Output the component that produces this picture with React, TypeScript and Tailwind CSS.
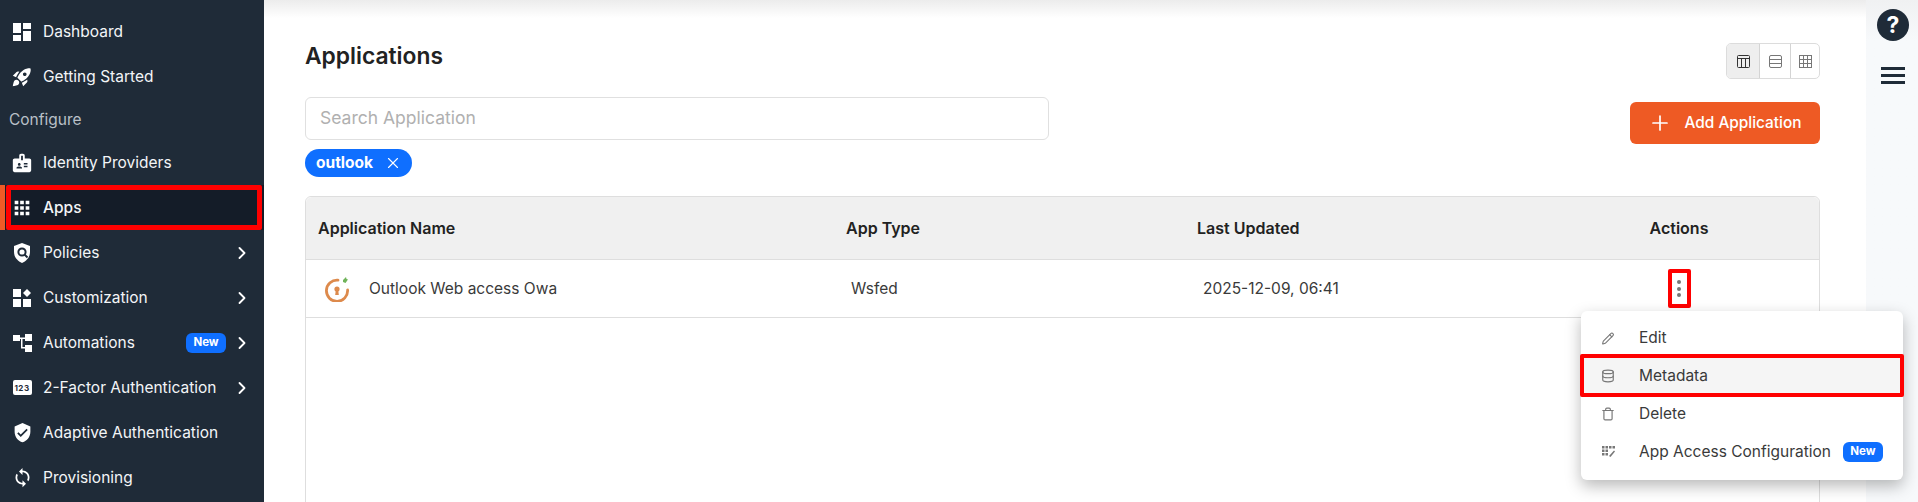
import { ChevronRight, Database, Pencil, Plus, Trash, X } from "lucide-react";
import React from "react";
import {
  MdApps,
  MdBadge,
  MdOutlineSync,
  MdRocketLaunch,
  MdVerifiedUser,
} from "react-icons/md";

const NewBadge = () => (
  <span className="flex h-[20px] w-[40px] items-center justify-center rounded-[6px] bg-[#0f6fff] text-[11.5px] font-bold text-white">
    New
  </span>
);

const DashboardIcon = () => (
  <svg width="18" height="18" viewBox="0 0 18 18" fill="currentColor">
    <rect x="0" y="0" width="8" height="10" />
    <rect x="10" y="0" width="8" height="6" />
    <rect x="0" y="12" width="8" height="6" />
    <rect x="10" y="8" width="8" height="10" />
  </svg>
);

const PolicyIcon = () => (
  <svg width="18" height="20" viewBox="0 0 18 20">
    <path d="M9 0l8 3v6c0 5-3.4 9-8 11-4.600-2-8-6-8-11V3z" fill="currentColor" />
    <circle cx="9" cy="9" r="3.600" fill="none" stroke="#1f2b38" strokeWidth="2" />
    <path d="M11.500 11.500l3 3" stroke="#1f2b38" strokeWidth="2" />
  </svg>
);

const CustomizeIcon = () => (
  <svg width="18" height="18" viewBox="0 0 18 18" fill="currentColor">
    <rect x="0" y="0" width="8" height="8" />
    <path d="M14 0l4 4-4 4-4-4z" />
    <rect x="0" y="10" width="8" height="8" />
    <rect x="10" y="10" width="8" height="8" />
  </svg>
);

const AutomationIcon = () => (
  <svg width="19" height="18" viewBox="0 0 19 18" fill="currentColor">
    <rect x="0" y="1" width="7" height="6" />
    <rect x="12" y="0" width="7" height="7" />
    <rect x="12" y="11" width="7" height="7" />
    <path d="M7 3.500h5v1.500H9.500v8H12v1.500H8V5H7z" />
  </svg>
);

const CodeIcon = () => (
  <span className="flex h-[15px] w-[19px] items-center justify-center rounded-[2px] bg-white text-[8px] font-bold tracking-[0.5px] text-[#1f2b38]">
    123
  </span>
);

const navItems = [
  { label: "Dashboard", icon: <DashboardIcon /> },
  { label: "Getting Started", icon: <MdRocketLaunch size={22} /> },
  { label: "Configure", section: true },
  { label: "Identity Providers", icon: <MdBadge size={22} /> },
  { label: "Apps", icon: <MdApps size={22} />, active: true },
  { label: "Policies", icon: <PolicyIcon />, arrow: true },
  { label: "Customization", icon: <CustomizeIcon />, arrow: true },
  { label: "Automations", icon: <AutomationIcon />, arrow: true, badge: true },
  { label: "2-Factor Authentication", icon: <CodeIcon />, arrow: true },
  { label: "Adaptive Authentication", icon: <MdVerifiedUser size={21} /> },
  { label: "Provisioning", icon: <MdOutlineSync size={21} /> },
];

const Sidebar = () => (
  <aside className="flex h-[502px] w-[264px] shrink-0 flex-col overflow-hidden bg-[#1f2b38] pt-[9px] text-[15.5px] text-[#f3f5f7]">
    {navItems.map((item) =>
      item.section ? (
        <div key={item.label} className="flex h-[41px] items-center pl-[9px] text-[#b9c0c7]">
          {item.label}
        </div>
      ) : (
        <div
          key={item.label}
          className={`relative flex h-[45px] shrink-0 items-center ${
            item.active ? "border-l-[5px] border-[#ef5a26] bg-[#141c28] font-medium" : ""
          }`}
        >
          {item.active && (
            <div className="absolute top-0 right-[2px] bottom-0 left-[1px] rounded-[2px] border-[5px] border-[#ff0000]" />
          )}
          <span
            className={`flex w-[43px] shrink-0 items-center justify-center pl-[1px] text-white ${
              item.active ? "-ml-[5px]" : ""
            }`}
          >
            {item.icon}
          </span>
          <span className="whitespace-nowrap">{item.label}</span>
          {item.badge && (
            <span className="absolute left-[186px]">
              <NewBadge />
            </span>
          )}
          {item.arrow && (
            <ChevronRight size={20} strokeWidth={2.2} className="absolute left-[232px] text-white" />
          )}
        </div>
      ),
    )}
  </aside>
);

const ViewToggle = () => (
  <div className="flex h-[36px] w-[94px] overflow-hidden rounded-[5px] border border-[#dcdcdc] text-[#777]">
    <div className="flex w-[33px] items-center justify-center border-r border-[#d4d4d4] bg-[#eeeeee] text-[#333]">
      <svg width="13" height="13" viewBox="0 0 13 13" fill="none" stroke="currentColor">
        <rect x="0.500" y="0.500" width="12" height="12" rx="1" />
        <path d="M0.500 3.500h12M4.500 3.500v9M8.500 3.500v9" />
      </svg>
    </div>
    <div className="flex w-[31px] items-center justify-center border-r border-[#d4d4d4]">
      <svg width="13" height="13" viewBox="0 0 13 13" fill="none" stroke="currentColor">
        <rect x="0.500" y="0.500" width="12" height="12" rx="1.500" />
        <path d="M0.500 4.500h12M0.500 8.500h12" />
      </svg>
    </div>
    <div className="flex flex-1 items-center justify-center">
      <svg width="13" height="13" viewBox="0 0 13 13" fill="none" stroke="currentColor">
        <rect x="0.500" y="0.500" width="12" height="12" />
        <path d="M0.500 4.500h12M0.500 8.500h12M4.500 0.500v12M8.500 0.500v12" />
      </svg>
    </div>
  </div>
);

const AppLogo = () => (
  <svg width="28" height="26" viewBox="0 0 28 26" fill="none">
    <path
      d="M15 4.200A10.600 10.600 0 1 0 24.600 14"
      stroke="#dd8a4c"
      strokeWidth="2.800"
      strokeLinecap="round"
    />
    <circle cx="14" cy="13" r="2.600" fill="#dd8a4c" />
    <path d="M12.800 14h2.400l.6 5h-3.600z" fill="#dd8a4c" />
    <path d="M20 4l3-3 .5 2 1.500.5-2.500 3.500-2.500-1z" fill="#6fb35a" />
  </svg>
);

const AccessIcon = () => (
  <svg width="13" height="12" viewBox="0 0 13 12" fill="#777">
    <rect x="0" y="0" width="2.500" height="2.500" />
    <rect x="3.500" y="0" width="2.500" height="2.500" />
    <rect x="7" y="0" width="2.500" height="2.500" />
    <rect x="10.500" y="0" width="2.500" height="2.500" />
    <rect x="0" y="3.500" width="2.500" height="2.500" />
    <rect x="3.500" y="3.500" width="2.500" height="2.500" />
    <rect x="0" y="7" width="2.500" height="2.500" />
    <rect x="3.500" y="7" width="2.500" height="2.500" />
    <path d="M7 10l5-5.500 1 1L8.500 11z" />
  </svg>
);

const ActionMenu = () => (
  <div className="absolute top-[311px] left-[1581px] flex h-[169px] w-[322px] flex-col rounded-[6px] bg-white pt-[8px] text-[15.5px] text-[#3a3a3a] shadow-[0_6px_16px_rgba(0,0,0,0.28)]">
    <div className="flex h-[38px] items-center">
      <Pencil size={13} className="ml-[20px] w-[14px] text-[#777]" />
      <span className="ml-[24px]">Edit</span>
    </div>
    <div className="relative flex h-[38px] items-center bg-[#f5f5f5]">
      <div className="absolute -top-[3px] -right-[1px] -bottom-[2px] -left-[1px] rounded-[2px] border-[4px] border-[#ff0000]" />
      <Database size={14} className="ml-[20px] text-[#777]" />
      <span className="ml-[24px]">Metadata</span>
    </div>
    <div className="flex h-[38px] items-center">
      <Trash size={14} className="ml-[20px] text-[#777]" />
      <span className="ml-[24px]">Delete</span>
    </div>
    <div className="flex h-[38px] items-center">
      <span className="ml-[20px] flex w-[14px] justify-center">
        <AccessIcon />
      </span>
      <span className="ml-[24px]">App Access Configuration</span>
      <span className="ml-[12px]">
        <NewBadge />
      </span>
    </div>
  </div>
);

const AppTable = () => (
  <div className="h-[400px] rounded-t-[6px] border border-[#dedede]">
    <div className="grid h-[63px] grid-cols-[527px_364px_1fr_232px] items-center rounded-t-[6px] border-b border-[#dedede] bg-[#f0f0f0] pb-[1px] text-[16px] font-semibold text-[#222]">
      <div className="pl-[12px]">Application Name</div>
      <div className="pl-[13px]">App Type</div>
      <div>Last Updated</div>
      <div className="pr-[48px] text-center">Actions</div>
    </div>
    <div className="grid h-[58px] grid-cols-[527px_364px_1fr_232px] items-center border-b border-[#dedede] text-[15.5px] text-[#3a3a3a]">
      <div className="flex items-center pl-[17px]">
        <AppLogo />
        <span className="ml-[18px]">Outlook Web access Owa</span>
      </div>
      <div className="pl-[18px]">Wsfed</div>
      <div className="pl-[6px]">2025-12-09, 06:41</div>
      <div className="flex justify-center pr-[48px]">
        <div className="flex h-[39px] w-[23px] flex-col items-center justify-center gap-[2.500px] rounded-[2px] border-[4px] border-[#ff0000]">
          <span className="h-[4px] w-[4px] rounded-full bg-[#777]" />
          <span className="h-[4px] w-[4px] rounded-full bg-[#777]" />
          <span className="h-[4px] w-[4px] rounded-full bg-[#777]" />
        </div>
      </div>
    </div>
  </div>
);

export default function App() {
  return (
    <div
      className="relative flex h-[502px] w-[1918px] overflow-hidden bg-white"
      style={{ fontFamily: '"Inter", "Noto Sans", sans-serif' }}
    >
      <Sidebar />
      <main className="flex-1 bg-gradient-to-b from-[#ececec] to-white to-[18px] bg-[length:100%_18px] bg-no-repeat">
        <div className="pt-[43px] pr-[46px] pl-[41px]">
          <div className="flex h-[36px] items-start justify-between">
            <h1 className="text-[22.8px] leading-[26px] font-semibold text-[#222]">Applications</h1>
            <ViewToggle />
          </div>
          <div className="mt-[18px] flex justify-between">
            <div>
              <div className="flex h-[43px] w-[744px] items-center rounded-[6px] border border-[#e0e0e0] pl-[14px] text-[17.5px] text-[#b0b0b0]">
                Search Application
              </div>
              <div className="mt-[9px] flex h-[28px] w-[107px] items-center rounded-full bg-[#0f6fff] pl-[11px] text-[15.5px] font-bold text-white">
                outlook
                <X size={18} strokeWidth={1.5} className="ml-[11px]" />
              </div>
            </div>
            <div className="mt-[5px] flex h-[42px] w-[190px] items-center justify-center gap-[12px] rounded-[6px] bg-[#ee5a24] text-[15.4px] font-medium text-white">
              <Plus size={24} strokeWidth={1.700} />
              Add Application
            </div>
          </div>
          <div className="mt-[19px]">
            <AppTable />
          </div>
        </div>
      </main>
      <div className="flex w-[52px] shrink-0 flex-col items-center bg-gradient-to-b from-[#f0f1f2] to-[#f7f9fb] to-[40px] pt-[9px] pl-[2px]">
        <div className="flex h-[32px] w-[32px] items-center justify-center rounded-full bg-[#1f2b38] text-[23px] leading-none font-bold text-white">
          ?
        </div>
        <div className="mt-[26px] flex w-[24px] flex-col gap-[4.500px]">
          <span className="h-[2.500px] bg-[#1f2b38]" />
          <span className="h-[2.500px] bg-[#1f2b38]" />
          <span className="h-[2.500px] bg-[#1f2b38]" />
        </div>
      </div>
      <ActionMenu />
    </div>
  );
}
